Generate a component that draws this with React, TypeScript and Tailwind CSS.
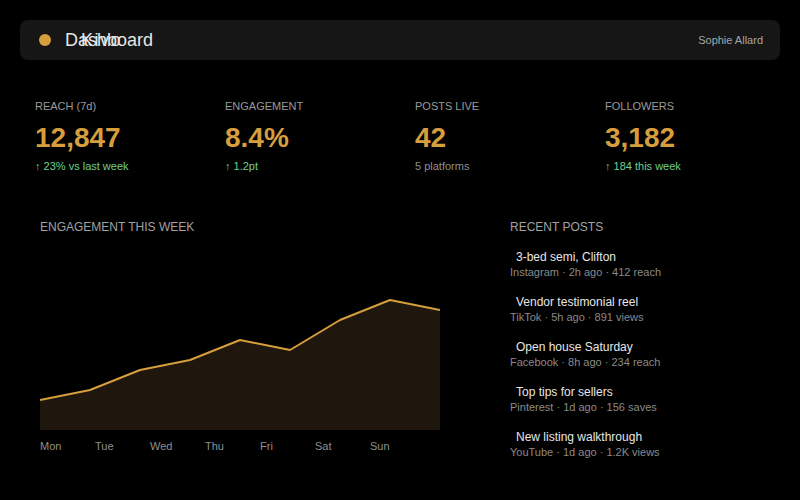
const stats = [
  { label: 'REACH (7d)', value: '12,847', sub: '↑ 23% vs last week', up: true },
  { label: 'ENGAGEMENT', value: '8.4%', sub: '↑ 1.2pt', up: true },
  { label: 'POSTS LIVE', value: '42', sub: '5 platforms', up: false },
  { label: 'FOLLOWERS', value: '3,182', sub: '↑ 184 this week', up: true },
]

const posts = [
  { title: '3-bed semi, Clifton', meta: 'Instagram · 2h ago · 412 reach' },
  { title: 'Vendor testimonial reel', meta: 'TikTok · 5h ago · 891 views' },
  { title: 'Open house Saturday', meta: 'Facebook · 8h ago · 234 reach' },
  { title: 'Top tips for sellers', meta: 'Pinterest · 1d ago · 156 saves' },
  { title: 'New listing walkthrough', meta: 'YouTube · 1d ago · 1.2K views' },
]

const days = ['Mon', 'Tue', 'Wed', 'Thu', 'Fri', 'Sat', 'Sun']

// y values inside a 400x190 box
const points = [160, 150, 130, 120, 100, 110, 80, 60, 70]

function EngagementChart() {
  const line = points.map((y, i) => `${i * 50},${y}`).join(' ')
  const area = `0,190 ${line} 400,190`
  return (
    <svg width="400" height="190" viewBox="0 0 400 190" className="block">
      <polygon points={area} fill="#1f170d" />
      <polyline points={line} fill="none" stroke="#d69e3c" strokeWidth="2" strokeLinejoin="round" />
    </svg>
  )
}

export default function App() {
  return (
    <div
      className="w-[800px] h-[500px] bg-black overflow-hidden"
      style={{ fontFamily: '"Liberation Sans", Arial, sans-serif' }}
    >
      <div className="mx-5 mt-5 h-10 rounded-lg bg-[#161616] flex items-center pl-[19px] pr-[17px]">
        <div className="w-3 h-3 rounded-full bg-[#d69e3c]" />
        <div className="relative ml-[14px] text-[18px] leading-6 text-[#e6e6e6]">
          <span>Dashboard</span>
          <span className="absolute left-[16px] top-0 tracking-[1.5px]">Kivo</span>
        </div>
        <div className="ml-auto text-[11px] text-[#a6a6a6]">Sophie Allard</div>
      </div>

      <div className="mt-[38px] ml-[35px] grid grid-cols-[190px_190px_190px_190px]">
        {stats.map((s) => (
          <div key={s.label}>
            <div className="text-[11px] leading-4 text-[#9a9a9a]">{s.label}</div>
            <div className="mt-2 text-[28px] leading-8 font-bold text-[#d69e3c]">{s.value}</div>
            <div className={`mt-1 text-[11px] leading-4 ${s.up ? 'text-[#6fcf8f]' : 'text-[#8f8f8f]'}`}>
              {s.sub}
            </div>
          </div>
        ))}
      </div>

      <div className="mt-[45px] ml-10 flex">
        <div className="w-[400px]">
          <div className="text-[12px] leading-4 text-[#a0a0a0]">ENGAGEMENT THIS WEEK</div>
          <div className="mt-[5px]">
            <EngagementChart />
          </div>
          <div className="mt-[8px] flex text-[11px] leading-4 text-[#8f8f8f]">
            {days.map((d) => (
              <div key={d} className="w-[55px]">{d}</div>
            ))}
          </div>
        </div>

        <div className="ml-[70px]">
          <div className="text-[12px] leading-4 text-[#a0a0a0]">RECENT POSTS</div>
          <div className="mt-[14px] flex flex-col gap-[14px]">
            {posts.map((p) => (
              <div key={p.title}>
                <div className="pl-[6px] text-[12px] leading-4 text-[#e6e6e6]">{p.title}</div>
                <div className="-mt-[1px] text-[11px] leading-4 text-[#8a8a8a]">{p.meta}</div>
              </div>
            ))}
          </div>
        </div>
      </div>
    </div>
  )
}
